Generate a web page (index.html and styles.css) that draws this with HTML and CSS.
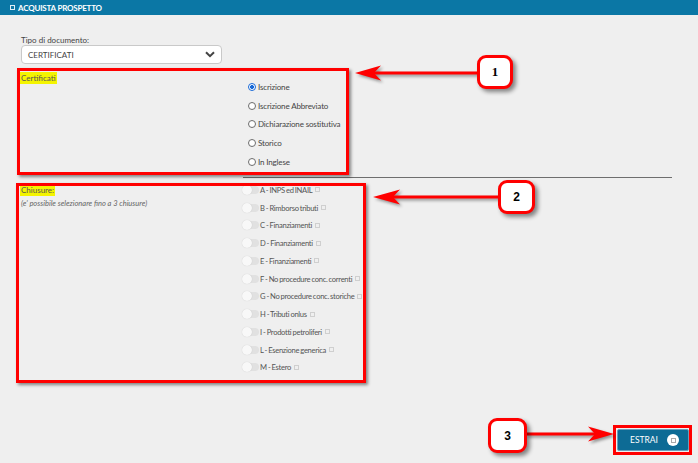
FILE: index.html
```html
<!DOCTYPE html>
<html lang="it">
<head>
<meta charset="utf-8">
<title>Acquista prospetto</title>
<link rel="stylesheet" href="styles.css">
</head>
<body>
<header class="header"><span class="sq"></span><span>ACQUISTA PROSPETTO</span></header>

<main class="content">
  <div class="doc-label">Tipo di documento:</div>
  <div class="select">
    <span>CERTIFICATI</span>
    <svg class="chev" width="10" height="7" viewBox="0 0 10 7"><path d="M1 1.2 L5 5.2 L9 1.2" fill="none" stroke="#444" stroke-width="2"/></svg>
  </div>

  <section class="cert">
    <div><span class="hl hl-cert">Certificati</span></div>
    <div class="radios">
      <div class="radio-row"><span class="radio checked"></span><span>Iscrizione</span></div>
      <div class="radio-row"><span class="radio"></span><span>Iscrizione Abbreviato</span></div>
      <div class="radio-row"><span class="radio"></span><span>Dichiarazione sostitutiva</span></div>
      <div class="radio-row"><span class="radio"></span><span>Storico</span></div>
      <div class="radio-row"><span class="radio"></span><span>In Inglese</span></div>
    </div>
  </section>

  <hr class="sep">

  <section class="chius">
    <div class="chius-left">
      <span class="hl">Chiusure:</span>
      <div class="note">(e' possibile selezionare fino a 3 chiusure)</div>
    </div>
    <div class="toggles">
      <div class="tg-row"><span class="tg"></span><span>A - INPS ed INAIL</span><span class="mini"></span></div>
      <div class="tg-row"><span class="tg"></span><span>B - Rimborso tributi</span><span class="mini"></span></div>
      <div class="tg-row"><span class="tg"></span><span>C - Finanziamenti</span><span class="mini"></span></div>
      <div class="tg-row"><span class="tg"></span><span>D - Finanziamenti</span><span class="mini"></span></div>
      <div class="tg-row"><span class="tg"></span><span>E - Finanziamenti</span><span class="mini"></span></div>
      <div class="tg-row"><span class="tg"></span><span>F - No procedure conc. correnti</span><span class="mini"></span></div>
      <div class="tg-row"><span class="tg"></span><span>G - No procedure conc. storiche</span><span class="mini"></span></div>
      <div class="tg-row"><span class="tg"></span><span>H - Tributi onlus</span><span class="mini"></span></div>
      <div class="tg-row"><span class="tg"></span><span>I - Prodotti petroliferi</span><span class="mini"></span></div>
      <div class="tg-row"><span class="tg"></span><span>L - Esenzione generica</span><span class="mini"></span></div>
      <div class="tg-row"><span class="tg"></span><span>M - Estero</span><span class="mini"></span></div>
    </div>
  </section>
</main>

<footer class="footer">
  <button class="btn">ESTRAI <span class="btn-dot"><span></span></span></button>
</footer>

<div class="mark mark1"></div>
<div class="mark mark2"></div>
<div class="mark mark3"></div>

<svg class="arrows" width="698" height="463" viewBox="0 0 698 463">
  <g fill="#ff0000" stroke="none">
    <rect x="374" y="71.5" width="104" height="3"/>
    <polygon points="355,73 381,65.5 374,73 381,80.5"/>
    <rect x="393" y="195.5" width="106" height="3"/>
    <polygon points="373,197 400,189.5 393,197 400,204.5"/>
    <rect x="526" y="432.5" width="70" height="3"/>
    <polygon points="614,434 588,426.5 595,434 588,441.5"/>
  </g>
</svg>

<div class="callout c1">1</div>
<div class="callout c2">2</div>
<div class="callout c3">3</div>
</body>
</html>
```

FILE: styles.css
```css
html, body {
  margin: 0;
  padding: 0;
}
body {
  position: relative;
  width: 698px;
  min-height: 463px;
  background: #efefef;
  font-family: Lato, "Open Sans", sans-serif;
  font-size: 8px;
  color: #444;
  display: flex;
  flex-direction: column;
  overflow: hidden;
}

.header {
  height: 15px;
  background: #0b77a5;
  color: #fff;
  font-weight: bold;
  font-size: 8px;
  display: flex;
  align-items: center;
  padding-left: 10px;
  gap: 3px;
  letter-spacing: -0.2px;
}
.sq {
  width: 3px;
  height: 3px;
  border: 1px solid #dfeef5;
}

.content {
  padding: 20px 0 0 21px;
}
.doc-label {
  line-height: 10px;
  color: #444;
}
.select {
  box-sizing: border-box;
  width: 201px;
  height: 19px;
  background: #fff;
  border: 1px solid #c9c9c9;
  border-radius: 4px;
  display: flex;
  align-items: center;
  justify-content: space-between;
  padding: 0 6px 0 6px;
  color: #444;
}
.chev {
  display: block;
}

.cert {
  margin-top: 8px;
  display: grid;
  grid-template-columns: 227px 1fr;
}
.hl {
  display: inline-block;
  background: #f4f400;
  line-height: 10px;
  padding: 1px 1px;
  margin-left: -1px;
  color: #555;
}
.radios {
  padding-top: 6px;
}
.radio-row {
  height: 18.6px;
  display: flex;
  align-items: center;
  gap: 2px;
  color: #444;
  letter-spacing: -0.15px;
}
.radio {
  box-sizing: border-box;
  width: 8px;
  height: 8px;
  border-radius: 50%;
  border: 1px solid #6c6c6c;
  background: #fff;
}
.radio.checked {
  border-color: #1769d8;
  background: radial-gradient(circle, #1769d8 0 1.8px, #fff 2.2px);
}

.sep {
  margin: 6px 0 0 222px;
  width: 429px;
  border: 0;
  border-top: 1px solid #6e6e6e;
  height: 0;
}

.chius {
  margin-top: 3px;
  display: grid;
  grid-template-columns: 222px 1fr;
}
.chius-left {
  padding-top: 3px;
}
.note {
  margin-top: 3px;
  font-style: italic;
  font-size: 7.5px;
  color: #666;
  line-height: 10px;
}
.tg-row {
  height: 17.75px;
  display: flex;
  align-items: center;
  color: #555;
  font-size: 7.6px;
  letter-spacing: -0.3px;
  word-spacing: -0.5px;
}
.tg {
  position: relative;
  width: 16px;
  height: 8px;
  border-radius: 4px;
  background: #e1e1e1;
  margin-right: 1px;
}
.tg::after {
  content: "";
  position: absolute;
  left: -1px;
  top: -1px;
  width: 10px;
  height: 10px;
  border-radius: 50%;
  background: #f8f8f8;
  box-shadow: 0 0 1px rgba(0,0,0,0.18);
}
.mini {
  width: 3px;
  height: 3px;
  border: 1px solid #cfcfcf;
  margin-left: 3px;
}

.footer {
  margin-top: auto;
  display: flex;
  justify-content: flex-end;
  padding: 0 9px 12px 0;
}
.btn {
  box-sizing: border-box;
  width: 72px;
  height: 22px;
  background: #0d6b95;
  border: 1px solid #6a9fbb;
  border-radius: 2px;
  color: #fff;
  font-family: Lato, sans-serif;
  font-size: 8.5px;
  display: flex;
  align-items: center;
  padding: 0 0 0 12px;
  gap: 9px;
}
.btn-dot {
  width: 12px;
  height: 12px;
  border-radius: 50%;
  background: #fff;
  display: flex;
  align-items: center;
  justify-content: center;
}
.btn-dot span {
  width: 3px;
  height: 3px;
  border: 1px solid #aaa;
}

/* annotation overlays */
.mark {
  position: absolute;
  box-sizing: border-box;
  border: 3px solid #ff0000;
  box-shadow: 2px 2px 3px rgba(0,0,0,0.45);
}
.mark1 { left: 17px; top: 68px; width: 332px; height: 107px; }
.mark2 { left: 16px; top: 183px; width: 350px; height: 200px; }
.mark3 { left: 613px; top: 425px; width: 79px; height: 30px; box-shadow: none; }

.arrows {
  position: absolute;
  left: 0;
  top: 0;
  filter: drop-shadow(2px 2px 1.5px rgba(0,0,0,0.4));
}

.callout {
  position: absolute;
  box-sizing: border-box;
  background: #fff;
  border: 3px solid #ff0000;
  border-radius: 9px;
  box-shadow: 3px 3px 4px rgba(0,0,0,0.45);
  display: flex;
  align-items: center;
  justify-content: center;
  font-weight: bold;
  font-size: 12px;
  color: #000;
}
.c1 { left: 477px; top: 55px; width: 36px; height: 34px; font-family: "Liberation Serif", serif; font-size: 13px; }
.c2 { left: 498px; top: 180px; width: 37px; height: 34px; font-family: "Liberation Sans", sans-serif; }
.c3 { left: 488px; top: 418px; width: 39px; height: 35px; font-family: "Liberation Sans", sans-serif; }
```
